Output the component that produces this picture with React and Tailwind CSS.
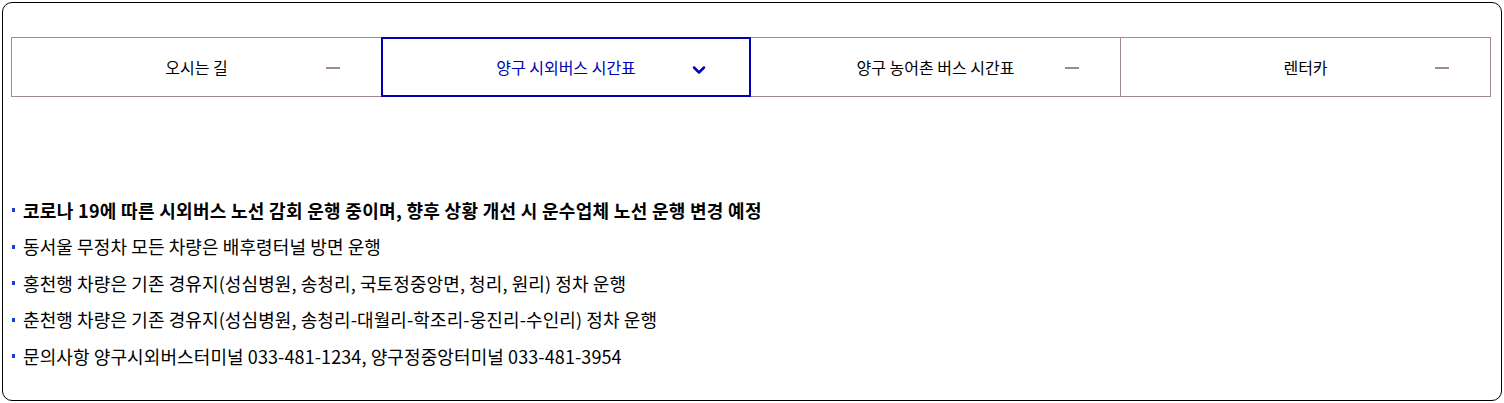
import { ChevronDown } from 'lucide-react'

const tabs = [
  { label: '오시는 길' },
  { label: '양구 시외버스 시간표', active: true },
  { label: '양구 농어촌 버스 시간표' },
  { label: '렌터카' }
]

const notices = [
  { text: '코로나 19에 따른 시외버스 노선 감회 운행 중이며, 향후 상황 개선 시 운수업체 노선 운행 변경 예정', bold: true },
  { text: '동서울 무정차 모든 차량은 배후령터널 방면 운행' },
  { text: '홍천행 차량은 기존 경유지(성심병원, 송청리, 국토정중앙면, 청리, 원리) 정차 운행' },
  { text: '춘천행 차량은 기존 경유지(성심병원, 송청리-대월리-학조리-웅진리-수인리) 정차 운행' },
  { text: '문의사항 양구시외버스터미널 033-481-1234, 양구정중앙터미널 033-481-3954' }
]

export default function App() {
  return (
    <div className="w-[1504px] h-[403px] bg-white p-[2px] font-['Noto_Sans_CJK_KR','Noto_Sans',sans-serif]">
      <div className="h-[399px] w-[1500px] border border-black rounded-[10px] pl-[8px] pr-[10px] pt-[34px]">
        {/* Tabs */}
        <div className="flex h-[60px]">
          {tabs.map((tab, i) => (
            <div
              key={tab.label}
              className={`relative w-[370px] flex items-center justify-center text-[16px] ${
                tab.active
                  ? 'border-2 border-[#0000b4] text-[#0000b4]'
                  : `border-y border-[#a48a8a] text-black ${i === 0 ? 'border-l' : ''} ${i >= 2 ? 'border-r' : ''}`
              }`}
            >
              <span>{tab.label}</span>
              {tab.active ? (
                <ChevronDown size={20} strokeWidth={3} className="absolute right-[40px] top-[21px] text-[#0000b4]" />
              ) : (
                <span className="absolute right-[41px] top-[29px] w-[14px] h-[2px] bg-[#a48a8a]" />
              )}
            </div>
          ))}
        </div>

        {/* Notices */}
        <ul className="mt-[95px]">
          {notices.map(n => (
            <li key={n.text} className={`flex items-center h-[36.5px] text-[18px] text-black ${n.bold ? 'font-bold tracking-[0.3px]' : 'tracking-[0.1px]'}`}>
              <span className="w-[3px] h-[4px] bg-[#1a3fd0] ml-[1px] mr-[8px]" />
              <span>{n.text}</span>
            </li>
          ))}
        </ul>
      </div>
    </div>
  )
}
